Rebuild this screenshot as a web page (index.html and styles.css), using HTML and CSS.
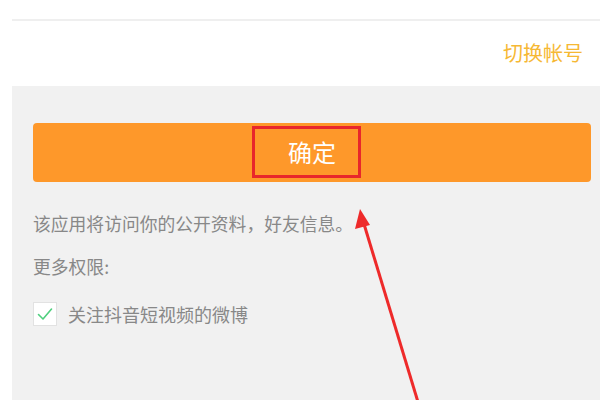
FILE: index.html
```html
<!DOCTYPE html>
<html lang="zh-CN">
<head>
<meta charset="UTF-8" />
<meta name="viewport" content="width=device-width, initial-scale=1" />
<title>授权</title>
<link rel="stylesheet" href="styles.css">
</head>
<body>

<div class="page">
  <div class="top-line"></div>

  <header class="account-bar">
    <a class="switch-link">切换帐号</a>
  </header>

  <section class="auth-panel">
    <button class="confirm-btn" type="button">确定</button>

    <p class="auth-desc">该应用将访问你的公开资料，好友信息。</p>
    <p class="auth-more">更多权限:</p>

    <label class="perm-row">
      <span class="check-box">
        <svg width="16" height="14" viewBox="0 0 16 14"><path d="M1.5 7.5 L6 12 L14.5 2" fill="none" stroke="#4fcf7e" stroke-width="1.6" stroke-linecap="round" stroke-linejoin="round"/></svg>
      </span>
      <span class="perm-text">关注抖音短视频的微博</span>
    </label>
  </section>

  <!-- 标注 -->
  <div class="mark-box"></div>
  <svg class="mark-arrow" width="600" height="400" viewBox="0 0 600 400">
    <line x1="364" y1="224" x2="418" y2="402" stroke="#ee2a2a" stroke-width="3"/>
    <polygon points="360,209 355,229 370,225" fill="#ee2a2a"/>
  </svg>
</div>

</body>
</html>
```

FILE: styles.css
```css
* { box-sizing: border-box; margin:0; padding:0; }
body {
  background:#fff; color:#888;
  font-family: "Noto Sans CJK SC", "Noto Sans", sans-serif;
  width:600px; height:400px; overflow:hidden;
}
.page {
  position: relative;
  height: 400px;
  padding-top: 19px;
}
.top-line {
  margin-left: 12px;
  height: 2px;
  background: #efefef;
}
.account-bar {
  height: 65px;
  margin-left: 12px;
  display: flex;
  justify-content: flex-end;
  align-items: center;
  padding-right: 17px;
  padding-bottom: 2px;
}
.switch-link {
  font-size: 20px;
  color: #f6b834;
  line-height: 24px;
}
.auth-panel {
  margin-left: 12px;
  background: #f1f1f1;
  height: 314px;
  padding: 37px 9px 0 21px;
}
.confirm-btn {
  display: block;
  width: 100%;
  height: 59px;
  border: none;
  border-radius: 4px;
  background: #fe982a;
  color: #fff;
  font-family: inherit;
  font-size: 24px;
  padding-bottom: 2px;
}
.auth-desc {
  margin-top: 29px;
  font-size: 17.8px;
  line-height: 24px;
}
.auth-more {
  margin-top: 19px;
  font-size: 17.8px;
  line-height: 24px;
}
.perm-row {
  margin-top: 24px;
  display: flex;
  align-items: center;
}
.check-box {
  width: 24px;
  height: 24px;
  background: #fff;
  border: 1px solid #e2e2e2;
  display: flex;
  align-items: center;
  justify-content: center;
}
.perm-text {
  margin-left: 11px;
  font-size: 18px;
  line-height: 24px;
}
.mark-box {
  position: absolute;
  left: 252px;
  top: 126px;
  width: 109px;
  height: 52px;
  border: 3px solid #e8262b;
}
.mark-arrow {
  position: absolute;
  left: 0;
  top: 0;
}
```
